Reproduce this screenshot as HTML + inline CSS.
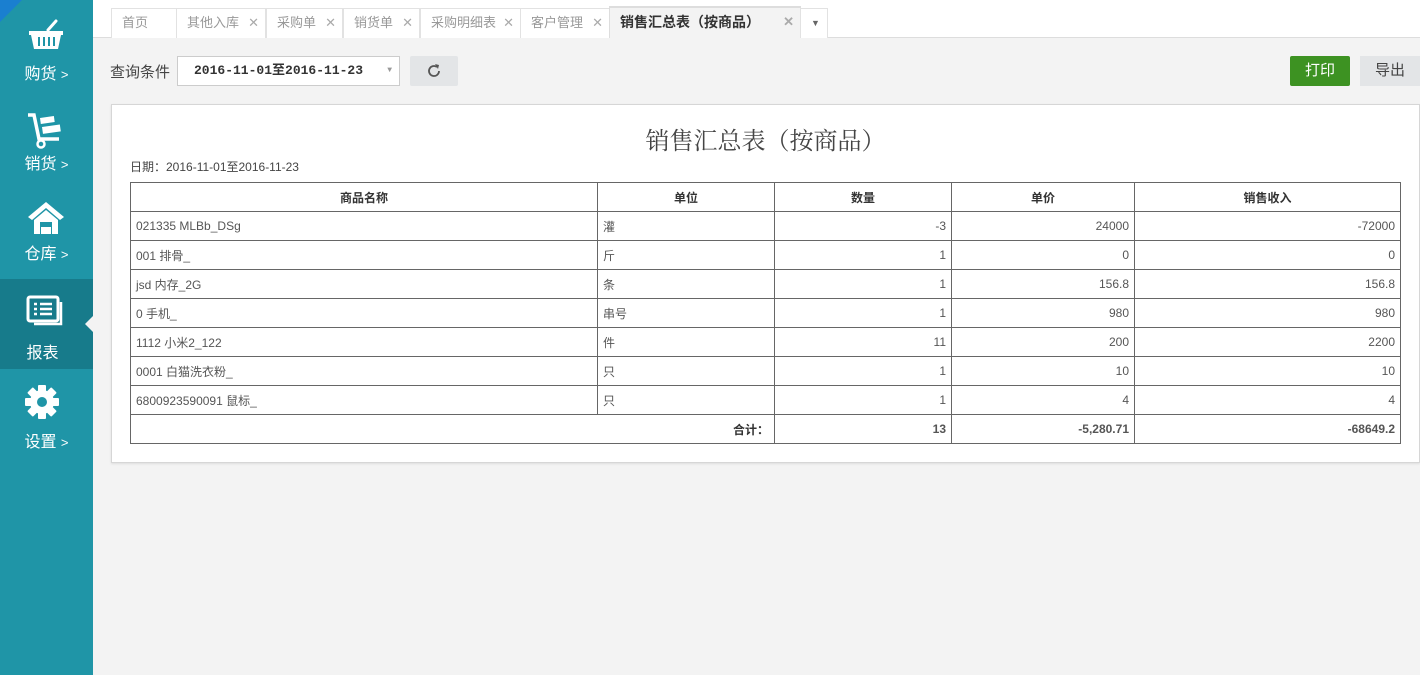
<!DOCTYPE html>
<html><head><meta charset="utf-8"><style>
*{box-sizing:border-box;margin:0;padding:0}
body{width:1420px;height:675px;overflow:hidden;background:#f3f3f3;font-family:"Liberation Sans","Noto Sans CJK SC",sans-serif;position:relative;color:#555}
#side{position:absolute;left:0;top:0;width:93px;height:675px;background:#1f95a7}
.item{position:absolute;left:0;width:93px;height:90px;color:#fff;text-align:center}
.item .lbl{position:absolute;left:0;width:93px;top:60px;font-size:16px;text-align:center}
.item svg{position:absolute;left:26px;top:18px}
.act{background:#177b8b}
.act:after{content:"";position:absolute;right:0;top:37px;border:8px solid transparent;border-right-color:#f3f3f3}
#tabs{position:absolute;left:93px;top:0;right:0;height:38px;background:#fff;border-bottom:1px solid #ddd}
.tab{position:absolute;top:8px;height:30px;border:1px solid #e2e2e2;border-bottom:none;font-size:13px;color:#999;line-height:28px;padding-left:10px;background:#fff}
.tab i{position:absolute;right:6px;top:0;font-style:normal;color:#aaa;font-size:13px}
.tab.on{background:#f3f3f3;color:#333;font-weight:bold;font-size:14px;border-top:2px solid #3aa0b8;top:6px;height:32px;border-color:#ddd}
table{border-collapse:collapse;position:absolute;left:130px;top:182px;width:1271px;font-size:12px;color:#555}
td,th{border:1px solid #666;height:29px;padding:0 5px}
th{font-weight:bold;color:#333}
td.r{text-align:right}
</style></head><body>
<div id="side">
<div class="item" style="top:0">
<svg width="40" height="34" viewBox="0 0 40 34"><path d="M22 12 L30 3" stroke="#fff" stroke-width="3" stroke-linecap="round"/><path d="M3 13h34v4h-2l-3 14H8L5 17H3z" fill="#fff"/><path d="M13 19v9M18 19v9M23 19v9M28 19v9" stroke="#1f95a7" stroke-width="2"/></svg>
<div class="lbl">购货 <span style="font-size:13px">&gt;</span></div></div>
<div class="item" style="top:90px">
<svg width="40" height="40" viewBox="0 0 40 40" style="top:22px"><path d="M2 3h6l5 24h20" stroke="#fff" stroke-width="3.5" fill="none"/><circle cx="15" cy="32" r="3.5" stroke="#fff" stroke-width="2.5" fill="none"/><rect x="14" y="6" width="14" height="6" fill="#fff" transform="rotate(-8 14 6)"/><rect x="16" y="15" width="18" height="7" fill="#fff" transform="rotate(-8 16 15)"/></svg>
<div class="lbl">销货 <span style="font-size:13px">&gt;</span></div></div>
<div class="item" style="top:180px">
<svg width="40" height="36" viewBox="0 0 40 36" style="top:20px"><path d="M20 2 L2 17 L6 20 L20 8 L34 20 L38 17z" fill="#fff"/><path d="M8 20v14h24V20L20 10z" fill="#fff"/><rect x="14" y="22" width="12" height="12" fill="#1f95a7"/><rect x="15" y="27" width="10" height="7" fill="#fff"/></svg>
<div class="lbl">仓库 <span style="font-size:13px">&gt;</span></div></div>
<div class="item act" style="top:279px">
<svg width="40" height="34" viewBox="0 0 40 34" style="top:16px"><rect x="2" y="2" width="30" height="24" rx="2" stroke="#fff" stroke-width="3" fill="none"/><path d="M35 7v22H8" stroke="#fff" stroke-width="2.5" fill="none"/><path d="M8 9h3M14 9h12M8 14h3M14 14h12M8 19h3M14 19h12" stroke="#fff" stroke-width="2.5"/></svg>
<div class="lbl" style="left:-4px">报表</div></div>
<div class="item" style="top:368px">
<svg width="36" height="36" viewBox="0 0 36 36" style="left:24px;top:16px"><g fill="#fff"><circle cx="18" cy="18" r="12"/><rect x="14" y="1" width="8" height="34" rx="1"/><rect x="14" y="1" width="8" height="34" rx="1" transform="rotate(45 18 18)"/><rect x="14" y="1" width="8" height="34" rx="1" transform="rotate(90 18 18)"/><rect x="14" y="1" width="8" height="34" rx="1" transform="rotate(135 18 18)"/></g><circle cx="18" cy="18" r="5" fill="#1f95a7"/></svg>
<div class="lbl">设置 <span style="font-size:13px">&gt;</span></div></div>
<div style="position:absolute;left:0;top:0;width:0;height:0;border-top:22px solid #1a7fd0;border-right:22px solid transparent"></div>
</div>
<div id="tabs">
<div class="tab" style="left:18px;width:66px">首页</div>
<div class="tab" style="left:83px;width:90px">其他入库<i>✕</i></div>
<div class="tab" style="left:173px;width:77px">采购单<i>✕</i></div>
<div class="tab" style="left:250px;width:77px">销货单<i>✕</i></div>
<div class="tab" style="left:327px;width:101px">采购明细表<i>✕</i></div>
<div class="tab" style="left:427px;width:90px">客户管理<i>✕</i></div>
<div class="tab on" style="left:516px;width:192px">销售汇总表（按商品）<i>✕</i></div>
<div class="tab" style="left:707px;width:28px;font-size:9px;color:#666">▼</div>
</div>
<div style="position:absolute;left:110px;top:61px;font-size:15px;color:#444">查询条件</div>
<div style="position:absolute;left:177px;top:56px;width:223px;height:30px;background:#fff;border:1px solid #ccc;font-family:'Liberation Mono','Noto Sans CJK SC',monospace;font-weight:bold;font-size:13px;color:#333;line-height:28px;padding-left:16px">2016-11-01至2016-11-23<span style="position:absolute;right:7px;font-size:8px;color:#999">▼</span></div>
<div style="position:absolute;left:410px;top:56px;width:48px;height:30px;background:#e3e5e7;border-radius:2px"><svg width="18" height="18" viewBox="0 0 18 18" style="position:absolute;left:15px;top:6px"><path d="M14 9a5 5 0 1 1-2-4" stroke="#555" stroke-width="1.8" fill="none"/><path d="M10 2l4 1-1 4z" fill="#555"/></svg></div>
<div style="position:absolute;left:1290px;top:56px;width:60px;height:30px;background:#3d9222;border-radius:2px;color:#fff;font-size:15px;text-align:center;line-height:29px">打印</div>
<div style="position:absolute;left:1360px;top:56px;width:60px;height:30px;background:#e3e5e7;color:#444;font-size:15px;text-align:center;line-height:29px">导出</div>
<div style="position:absolute;left:111px;top:104px;width:1309px;height:359px;background:#fff;border:1px solid #d6d6d6;box-shadow:0 1px 2px #ddd"></div>
<div style="position:absolute;left:111px;width:1309px;top:121px;text-align:center;font-family:'Liberation Serif','Noto Serif CJK SC',serif;font-size:24px;color:#444">销售汇总表（按商品）</div>
<div style="position:absolute;left:130px;top:158px;font-size:12px;color:#444">日期：2016-11-01至2016-11-23</div>
<table>
<tr><th style="width:467px">商品名称</th><th style="width:177px">单位</th><th style="width:177px">数量</th><th style="width:183px">单价</th><th>销售收入</th></tr>
<tr><td>021335 MLBb_DSg</td><td>灌</td><td class="r">-3</td><td class="r">24000</td><td class="r">-72000</td></tr>
<tr><td>001 排骨_</td><td>斤</td><td class="r">1</td><td class="r">0</td><td class="r">0</td></tr>
<tr><td>jsd 内存_2G</td><td>条</td><td class="r">1</td><td class="r">156.8</td><td class="r">156.8</td></tr>
<tr><td>0 手机_</td><td>串号</td><td class="r">1</td><td class="r">980</td><td class="r">980</td></tr>
<tr><td>1112 小米2_122</td><td>件</td><td class="r">11</td><td class="r">200</td><td class="r">2200</td></tr>
<tr><td>0001 白猫洗衣粉_</td><td>只</td><td class="r">1</td><td class="r">10</td><td class="r">10</td></tr>
<tr><td>6800923590091 鼠标_</td><td>只</td><td class="r">1</td><td class="r">4</td><td class="r">4</td></tr>
<tr><td colspan="2" class="r" style="font-weight:bold;color:#333">合计：</td><td class="r" style="font-weight:bold">13</td><td class="r" style="font-weight:bold">-5,280.71</td><td class="r" style="font-weight:bold">-68649.2</td></tr>
</table>
</body></html>
